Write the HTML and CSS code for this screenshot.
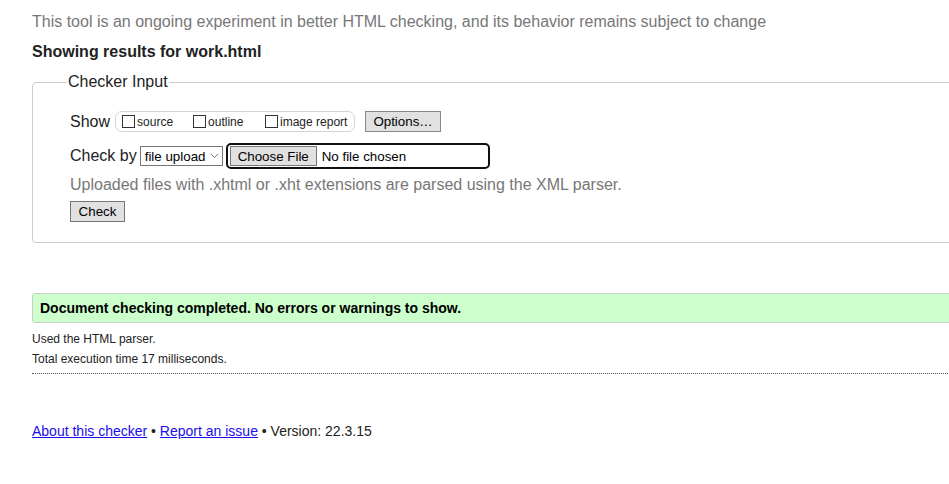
FILE: index.html
```html
<!DOCTYPE html>
<html lang="en">
<head>
<meta charset="utf-8">
<title>Showing results for work.html - Nu Html Checker</title>
<link rel="stylesheet" href="styles.css">
</head>
<body>
<div class="page">
  <p class="intro">This tool is an ongoing experiment in better HTML checking, and its behavior remains subject to change</p>
  <h2 class="heading">Showing results for work.html</h2>
  <fieldset class="input-box">
    <legend class="legend">Checker Input</legend>
    <div class="row row-show">
      <span class="row-label">Show</span>
      <span class="show-group">
        <label class="opt opt-source"><input type="checkbox" class="cb"><span>source</span></label>
        <label class="opt opt-outline"><input type="checkbox" class="cb"><span>outline</span></label>
        <label class="opt"><input type="checkbox" class="cb"><span>image report</span></label>
      </span>
      <button class="btn btn-options" type="button">Options…</button>
    </div>
    <div class="row row-check">
      <span class="row-label">Check by</span>
      <span class="select">file upload<svg class="chev" width="9" height="6" viewBox="0 0 9 6"><path d="M1 1 L4.5 4.5 L8 1" fill="none" stroke="#777" stroke-width="1"/></svg></span>
      <span class="file-box">
        <button class="btn btn-file" type="button">Choose File</button>
        <span class="file-name">No file chosen</span>
      </span>
    </div>
    <p class="hint">Uploaded files with .xhtml or .xht extensions are parsed using the XML parser.</p>
    <div class="row row-submit">
      <button class="btn btn-check" type="button">Check</button>
    </div>
  </fieldset>
  <div class="success">Document checking completed. No errors or warnings to show.</div>
  <p class="details">Used the HTML parser.</p>
  <p class="details">Total execution time 17 milliseconds.</p>
  <hr class="dots">
  <p class="footer"><a href="#" class="link">About this checker</a> • <a href="#" class="link">Report an issue</a> • Version: 22.3.15</p>
</div>
</body>
</html>
```
FILE: styles.css
```css
html {
  overflow: hidden;
}
body {
  margin: 0;
  background: #fff;
  color: #222;
  font-family: "Liberation Sans", Arial, sans-serif;
}
.page {
  width: 1100px;
  padding: 13px 0 0 32px;
}
.intro {
  margin: 0;
  font-size: 16px;
  line-height: 18px;
  color: #777;
}
.heading {
  margin: 12px 0 0;
  font-size: 16px;
  line-height: 18px;
  font-weight: bold;
  color: #222;
}
.input-box {
  margin: 12px 0 0;
  padding: 20px 0 20px 37px;
  border: 1px solid #ccc;
  border-radius: 4px;
}
.legend {
  margin-left: -3px;
  padding: 0 1px;
  font-size: 16px;
  line-height: 18px;
  color: #222;
}
.row {
  display: flex;
  align-items: center;
}
.row-label {
  font-size: 16px;
  line-height: 18px;
  color: #222;
}
.row-show {
  height: 21px;
}
.show-group {
  display: flex;
  align-items: center;
  margin-left: 5px;
  height: 19px;
  width: 232px;
  border: 1px solid #d4d4d4;
  border-radius: 7px;
  padding-left: 6px;
  box-sizing: content-box;
}
.opt {
  display: flex;
  align-items: center;
  font-size: 12px;
  color: #222;
}
.opt-source {
  width: 71px;
}
.opt-outline {
  width: 72px;
}
.cb {
  width: 13px;
  height: 13px;
  margin: 0 2px 0 0;
  appearance: none;
  border: 1px solid #333;
  background: #fff;
  box-sizing: border-box;
}
.btn {
  font-family: "Liberation Sans", Arial, sans-serif;
  font-size: 13.33px;
  color: #000;
  background: #e1e1e1;
  border: 1px solid #adadad;
  border-radius: 0;
  padding: 0;
  box-sizing: border-box;
}
.btn-options {
  margin-left: 10px;
  width: 76px;
  height: 21px;
  border-color: #888;
}
.row-check {
  margin-top: 11px;
  height: 26px;
}
.select {
  display: flex;
  align-items: center;
  justify-content: space-between;
  margin-left: 3px;
  width: 83px;
  height: 20px;
  box-sizing: border-box;
  border: 1px solid #767676;
  padding: 0 3px 0 4px;
  font-size: 13.33px;
  color: #000;
  background: #fff;
}
.chev {
  display: block;
}
.file-box {
  display: flex;
  align-items: center;
  margin-left: 3px;
  width: 264px;
  height: 26px;
  box-sizing: border-box;
  border: 2px solid #101010;
  border-radius: 5px;
  padding-left: 2px;
}
.btn-file {
  width: 87px;
  height: 20px;
  border-color: #767676;
}
.file-name {
  margin-left: 5px;
  font-size: 13.33px;
  color: #000;
}
.hint {
  margin: 7px 0 0;
  font-size: 16px;
  line-height: 18px;
  color: #777;
}
.row-submit {
  margin-top: 7px;
}
.btn-check {
  width: 55px;
  height: 21px;
  border-color: #767676;
}
.success {
  margin-top: 50px;
  height: 30px;
  box-sizing: border-box;
  padding-left: 7px;
  border: 1px solid #ccc;
  border-radius: 3px;
  background: #ccffcc;
  font-size: 14px;
  font-weight: bold;
  line-height: 28px;
  color: #000;
}
.details {
  margin: 0;
  font-size: 12px;
  line-height: 20px;
  color: #222;
}
.success + .details {
  margin-top: 6px;
}
.dots {
  margin: 4px 0 0;
  height: 0;
  border: 0;
  border-top: 1px dotted #555;
}
.footer {
  margin: 48px 0 0;
  font-size: 14px;
  line-height: 18px;
  color: #222;
}
.link {
  color: #1a0dee;
}
```
